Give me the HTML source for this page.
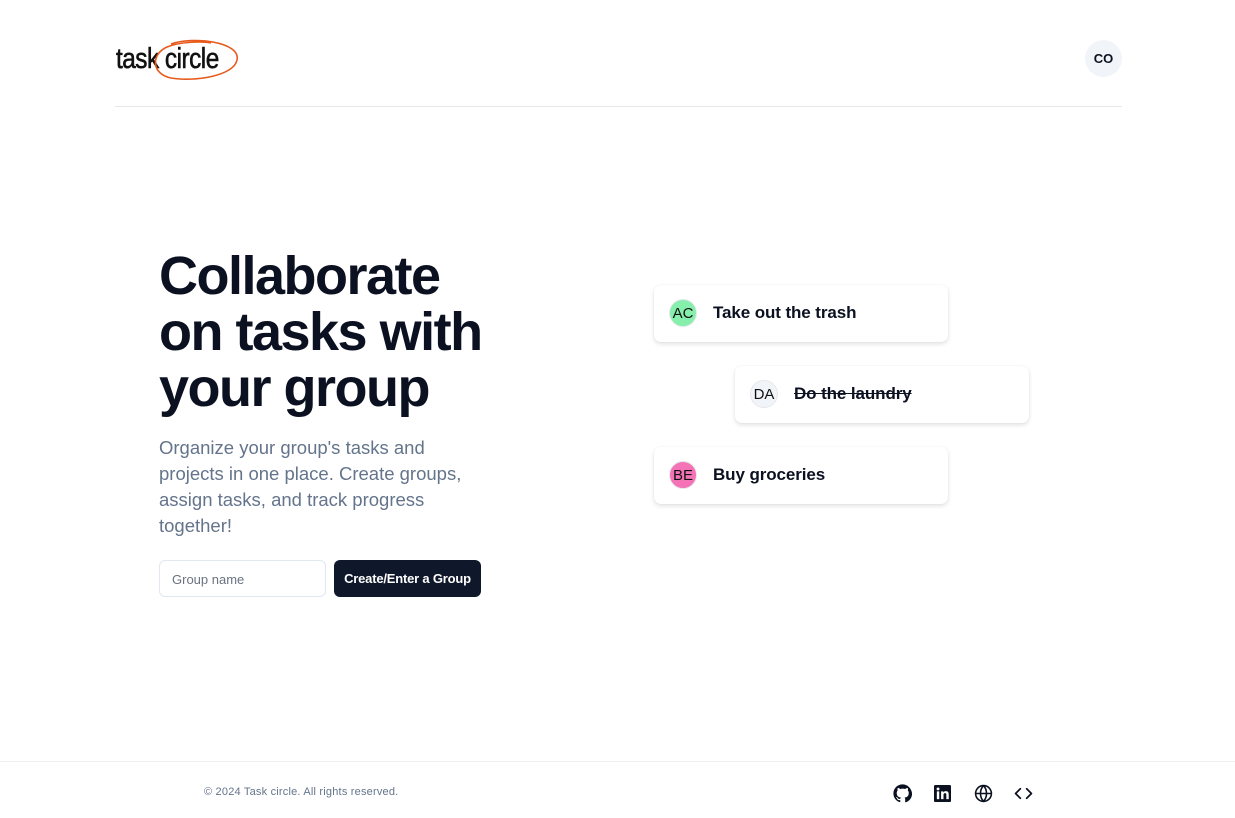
<!DOCTYPE html>
<html><head><meta charset="utf-8"><style>
*{box-sizing:border-box;margin:0;padding:0}
body{width:1235px;height:818px;background:#fff;font-family:"Liberation Sans",sans-serif;color:#0b1120;position:relative;overflow:hidden}
.hdr{position:absolute;left:115px;top:0;width:1007px;height:107px;border-bottom:1px solid #e5e7eb}
.logo{position:absolute;left:1px;top:43px;font-size:29px;letter-spacing:-.6px;color:#111;transform:scaleX(.84);transform-origin:left;-webkit-text-stroke:.6px #111}
.co{position:absolute;right:0;top:40px;width:37px;height:37px;border-radius:50%;background:#f1f5f9;font-size:13px;font-weight:bold;text-align:center;line-height:37px}
h1{position:absolute;left:159px;top:248px;font-size:54px;line-height:56px;letter-spacing:-1.5px;font-weight:bold;color:#0b1120}
.p{position:absolute;left:159px;top:435px;width:330px;font-size:18.5px;line-height:26px;color:#64748b}
.inp{position:absolute;left:159px;top:560px;width:167px;height:37px;border:1px solid #e2e8f0;border-radius:6px;font-size:13px;color:#6b7280;padding-left:12px;line-height:37px}
.btn{position:absolute;left:334px;top:560px;width:147px;height:37px;border-radius:6px;background:#0f172a;color:#fff;font-size:13px;font-weight:bold;text-align:center;line-height:37px;letter-spacing:-.2px}
.card{position:absolute;width:294px;height:57px;border-radius:7px;background:#fff;box-shadow:0 2px 5px rgba(0,0,0,.12),0 0 1px rgba(0,0,0,.08)}
.av{position:absolute;left:15px;top:14px;width:28px;height:28px;border-radius:50%;font-size:15px;display:flex;align-items:center;justify-content:center;color:#111;border:1px solid #e5e7eb}
.t{position:absolute;left:59px;top:18px;font-size:17px;line-height:20px;font-weight:bold;letter-spacing:-.1px}
.ftr{position:absolute;left:0;top:761px;width:1235px;border-top:1px solid #eef0f3;height:57px}
.copy{position:absolute;left:204px;top:24px;font-size:11px;color:#64748b;letter-spacing:.2px}
.ic{position:absolute;top:22px}
</style></head><body>
<div class="hdr">
<div class="logo">task circle</div>
<svg style="position:absolute;left:34px;top:38px" width="92" height="44" viewBox="0 0 92 44"><path d="M22 6 C45 -2 92 4 88 22 C85 38 45 44 22 40 C2 36 2 16 18 9 C30 4 52 3 62 5" fill="none" stroke="#e65a1c" stroke-width="1.6"/></svg>
<div class="co">CO</div>
</div>
<h1>Collaborate<br>on tasks with<br>your group</h1>
<div class="p">Organize your group's tasks and projects in one place. Create groups, assign tasks, and track progress together!</div>
<div class="inp">Group name</div>
<div class="btn">Create/Enter a Group</div>
<div class="card" style="left:654px;top:285px"><div class="av" style="background:#86efac">AC</div><div class="t">Take out the trash</div></div>
<div class="card" style="left:735px;top:366px"><div class="av" style="background:#f1f5f9">DA</div><div class="t" style="text-decoration:line-through">Do the laundry</div></div>
<div class="card" style="left:654px;top:447px"><div class="av" style="background:#f472b6">BE</div><div class="t">Buy groceries</div></div>
<div class="ftr">
<div class="copy">© 2024 Task circle. All rights reserved.</div>
<svg class="ic" style="left:893px" width="19" height="19" viewBox="0 0 24 24"><path fill="#0b1120" d="M12 .5C5.6.5.5 5.6.5 12c0 5.1 3.3 9.4 7.9 10.9.6.1.8-.3.8-.6v-2c-3.2.7-3.9-1.5-3.9-1.5-.5-1.3-1.3-1.7-1.3-1.7-1-.7.1-.7.1-.7 1.2.1 1.8 1.2 1.8 1.2 1 1.8 2.7 1.3 3.4 1 .1-.8.4-1.3.7-1.6-2.6-.3-5.3-1.3-5.3-5.7 0-1.3.5-2.3 1.2-3.1-.1-.3-.5-1.5.1-3.1 0 0 1-.3 3.3 1.2a11 11 0 0 1 6 0c2.3-1.5 3.3-1.2 3.3-1.2.7 1.6.2 2.8.1 3.1.8.8 1.2 1.9 1.2 3.1 0 4.4-2.7 5.4-5.3 5.7.4.4.8 1.1.8 2.2v3.3c0 .3.2.7.8.6 4.6-1.5 7.9-5.8 7.9-10.9C23.5 5.6 18.4.5 12 .5z"/></svg>
<svg class="ic" style="left:934px;top:23px" width="17" height="17" viewBox="0 0 24 24"><rect width="24" height="24" rx="2" fill="#0b1120"/><rect x="4" y="9" width="3.4" height="11" fill="#fff"/><circle cx="5.7" cy="5.5" r="2" fill="#fff"/><path d="M10 9h3.2v1.6c.5-1 1.8-1.9 3.6-1.9 3.4 0 4 2.2 4 5.1V20h-3.4v-5.5c0-1.3 0-3-1.8-3s-2.2 1.4-2.2 2.9V20H10z" fill="#fff"/></svg>
<svg class="ic" style="left:974px" width="19" height="19" viewBox="0 0 24 24" fill="none" stroke="#0b1120" stroke-width="2"><circle cx="12" cy="12" r="10"/><path d="M2 12h20M12 2a15 15 0 0 1 0 20M12 2a15 15 0 0 0 0 20"/></svg>
<svg class="ic" style="left:1014px" width="19" height="19" viewBox="0 0 24 24" fill="none" stroke="#0b1120" stroke-width="2.2" stroke-linecap="round" stroke-linejoin="round"><path d="M8 6l-6 6 6 6M16 6l6 6-6 6"/></svg>
</div>
</body></html>
